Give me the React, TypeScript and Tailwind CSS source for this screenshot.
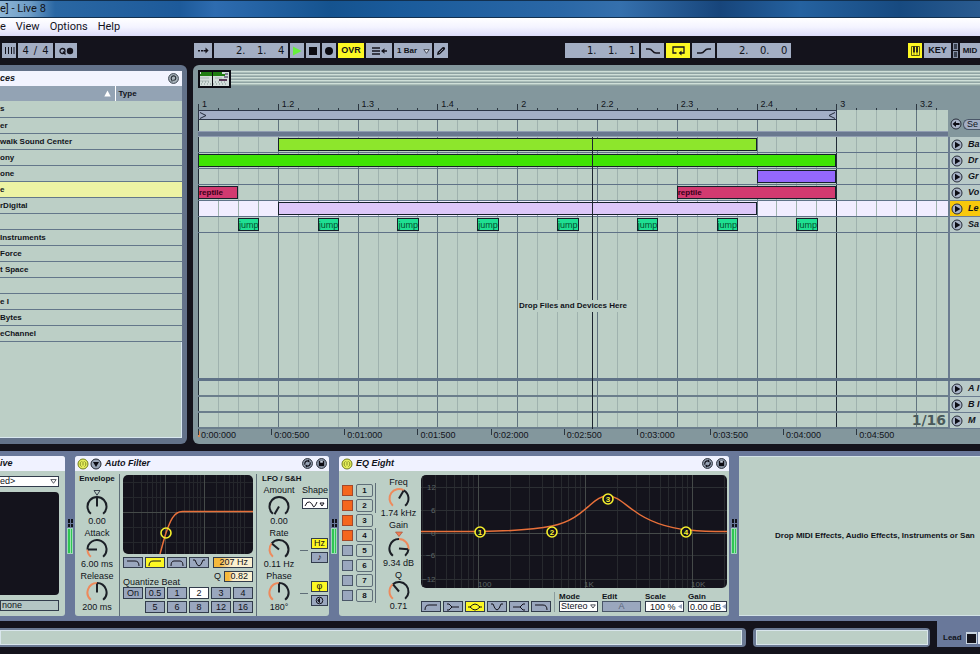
import type { ReactNode } from "react"
import clsx from "clsx"

const VISIBLE_BEATS = 9.4
const pct = (beats: number) => `${(beats / VISIBLE_BEATS) * 100}%`

const browserItems = [
  "s",
  "er",
  "walk Sound Center",
  "ony",
  "one",
  "e",
  "rDigital",
  "",
  "Instruments",
  "Force",
  "t Space",
  "",
  "e I",
  "Bytes",
  "eChannel",
]

const rulerLabels = ["1", "1.2", "1.3", "1.4", "2", "2.2", "2.3", "2.4", "3", "3.2"]

const timeLabels = [
  "0:00:000",
  "0:00:500",
  "0:01:000",
  "0:01:500",
  "0:02:000",
  "0:02:500",
  "0:03:000",
  "0:03:500",
  "0:04:000",
  "0:04:500",
]

type ClipData = { start: number; length: number; label?: string; color: string }

const jumpClips: ClipData[] = [0, 1, 2, 3, 4, 5, 6, 7].map((beat) => ({
  start: beat + 0.5,
  length: 0.27,
  label: "jump",
  color: "bg-[#1fdf92] text-[#04502f] text-[9px]",
}))

const tracks: { name: string; selected?: boolean; clips: ClipData[] }[] = [
  { name: "Ba", clips: [{ start: 1, length: 6, color: "bg-[#8de62c]" }] },
  { name: "Dr", clips: [{ start: 0, length: 8, color: "bg-[#3fe404]" }] },
  { name: "Gr", clips: [{ start: 7, length: 1, color: "bg-[#9468fd]" }] },
  {
    name: "Vo",
    clips: [
      { start: 0, length: 0.5, label: "reptile", color: "bg-[#d23a70] text-[#3a0018] font-bold text-[8px]" },
      { start: 6, length: 2, label: "reptile", color: "bg-[#d23a70] text-[#3a0018] font-bold text-[8px]" },
    ],
  },
  { name: "Le", selected: true, clips: [{ start: 1, length: 6, color: "bg-[#dcc6f8]" }] },
  { name: "Sa", clips: jumpClips },
]

const returns = ["A I", "B I", "M"]

function Grid() {
  const lines = Array.from({ length: 38 }, (_, i) => i)
  return (
    <div className="pointer-events-none absolute inset-0">
      {lines.map((i) => (
        <div
          key={i}
          className={clsx(
            "absolute inset-y-0 w-px",
            i === 0 || i === 32 ? "bg-[#1f2a35]" : i % 4 === 0 ? "bg-[#61747f]" : "bg-[#9fb2ae]"
          )}
          style={{ left: pct(i / 4) }}
        />
      ))}
    </div>
  )
}

function Clip({ clip }: { clip: ClipData }) {
  return (
    <div
      className={clsx("absolute top-px h-[13px] overflow-hidden border border-[#15202a] leading-[12px]", clip.color)}
      style={{ left: pct(clip.start), width: pct(clip.length) }}
    >
      {clip.label}
    </div>
  )
}

function TrackHeader({ name, selected }: { name: string; selected?: boolean }) {
  return (
    <div
      className={clsx(
        "flex w-8 shrink-0 items-center gap-[5px] overflow-hidden border-b border-l-2 border-[#6b7c90] pl-px",
        selected ? "bg-[#f8c80c]" : "bg-[#b9cac8]"
      )}
    >
      <button aria-label={`Unfold ${name}`} className="shrink-0">
        <svg width="12" height="12" viewBox="0 0 12 12">
          <circle cx="6" cy="6" r="5" fill="#a9b4c8" stroke="#252a36" />
          <path d="M4 2.8 9.4 6 4 9.2Z" fill="#0c0c14" />
        </svg>
      </button>
      <span className="whitespace-nowrap text-[9px] font-bold italic">{name}</span>
    </div>
  )
}

function TitleBar() {
  return (
    <div className="relative h-[18px] shrink-0 overflow-hidden border-y border-[#12304f] bg-[linear-gradient(90deg,#8fb6d6_0px,#6d9cc6_30px,#2a67a3_55px,#1d5a9a_180px,#2e6cb0_215px,#15538f_330px,#1a5b9b_400px,#2a67a6_560px,#3570ad_620px,#17457b_720px,#2562a0_800px,#174a80_900px,#2a5b90_980px)] text-[11px] leading-[16px]">
      e] - Live 8
    </div>
  )
}

function MenuBar() {
  return (
    <nav className="flex h-[18px] shrink-0 items-center gap-[10px] bg-linear-to-b from-white via-[#f4f4ff] to-[#dcdcf8] text-[11px] leading-[18px] text-[#14141c]">
      <button>e</button>
      <button>View</button>
      <button>Options</button>
      <button>Help</button>
    </nav>
  )
}

function Tool({ label, className, children }: { label: string; className: string; children: ReactNode }) {
  return (
    <button
      aria-label={label}
      className={clsx("flex h-[15px] shrink-0 items-center justify-center text-[9px] font-bold", className)}
    >
      {children}
    </button>
  )
}

function Position({ values }: { values: string[] }) {
  return (
    <div className="flex h-[15px] w-[74px] shrink-0 items-center bg-[#a3aec4] pl-[22px] font-['DejaVu_Sans',sans-serif] text-[10px]">
      {values.map((value, i) => (
        <span key={i} className="w-[21px] shrink-0 last:w-auto">
          {value}
        </span>
      ))}
    </div>
  )
}

function TransportBar() {
  return (
    <div className="flex h-[29px] shrink-0 items-center gap-[117px] overflow-hidden bg-[#14131c]">
      <div className="flex shrink-0 gap-[2px] pl-[2px]">
        <Tool label="Nudge" className="w-[14px] bg-[#a3aec4]">
          <svg width="11" height="9" viewBox="0 0 11 9" stroke="#14131c" fill="none">
            <path d="M1.5 1V8M4.5 1V8M7.5 1V8M10 1V8" />
          </svg>
        </Tool>
        <div className="flex h-[15px] w-[35px] items-center justify-center gap-[5px] bg-[#a3aec4] font-['DejaVu_Sans',sans-serif] text-[10px]">
          <span>4</span>
          <span>/</span>
          <span>4</span>
        </div>
        <Tool label="Metronome" className="w-[22px] bg-[#a3aec4]">
          <svg width="15" height="8" viewBox="0 0 15 8">
            <circle cx="3.5" cy="4" r="2.5" fill="none" stroke="#14131c" strokeWidth="1.3" />
            <path d="M4 4.500 6.500 7.500" stroke="#14131c" strokeWidth="1.200" />
            <circle cx="11" cy="4" r="3.200" fill="#14131c" />
          </svg>
        </Tool>
      </div>

      <div className="flex shrink-0 gap-[2px]">
        <Tool label="Follow" className="w-[18px] bg-[#a3aec4]">
          <svg width="11" height="7" viewBox="0 0 11 7" fill="#14131c">
            <path d="M0 3h2v1.4H0zM3 3h2v1.4H3zM5.500 3h2V.6L10.600 3.600 7.500 6.600V4.400h-2z" />
          </svg>
        </Tool>
        <Position values={["2.", "1.", "4"]} />
        <Tool label="Play" className="w-[14px] bg-[#a3aec4]">
          <svg width="10" height="10" viewBox="0 0 10 10">
            <path d="M1 .5 9.500 5 1 9.500Z" fill="#65f03c" />
          </svg>
        </Tool>
        <Tool label="Stop" className="w-[14px] bg-[#a3aec4]">
          <span className="size-2 bg-[#0c0b12]" />
        </Tool>
        <Tool label="Record" className="w-[14px] bg-[#a3aec4]">
          <span className="size-2 rounded-full bg-[#0c0b12]" />
        </Tool>
        <Tool label="Overdub" className="w-[26px] bg-[#fdf823]">
          OVR
        </Tool>
        <Tool label="Back to arrangement" className="w-[26px] bg-[#a3aec4]">
          <svg width="15" height="8" viewBox="0 0 15 8" stroke="#14131c" strokeWidth="1.300" fill="none">
            <path d="M0 1h8M0 4h8M0 7h8M10 4h5" />
            <path d="M12.500 1.300V6.700L9 4Z" fill="#14131c" stroke="none" />
          </svg>
        </Tool>
        <div className="relative flex h-[15px] w-[38px] bg-[#a3aec4]">
          <select aria-label="Quantization" className="w-full appearance-none pl-[3px] text-[8px] font-bold">
            <option>1 Bar</option>
          </select>
          <svg className="pointer-events-none absolute right-[2px] top-[6px]" width="7" height="5" viewBox="0 0 7 5">
            <path d="M.8.6h5.400L3.500 4.300Z" fill="#dfe4ee" stroke="#30343e" strokeWidth=".8" />
          </svg>
        </div>
        <Tool label="Draw mode" className="w-[14px] bg-[#a3aec4]">
          <svg width="10" height="10" viewBox="0 0 10 10">
            <path d="M1 9 1.600 6 6.500 1.200Q8 .4 9 1.800 9.400 2.800 8.500 3.800L3.800 8.200Z" fill="#14131c" />
            <path d="M3 7 7 3" stroke="#a3aec4" strokeWidth=".8" />
          </svg>
        </Tool>
      </div>

      <div className="flex shrink-0 gap-[2px]">
        <Position values={["1.", "1.", "1"]} />
        <Tool label="Punch in" className="w-[23px] bg-[#a3aec4]">
          <svg width="14" height="6" viewBox="0 0 14 6" fill="none" stroke="#14131c" strokeWidth="1.400">
            <path d="M0 1H3Q5 1 6.500 3T10 5H14" />
          </svg>
        </Tool>
        <Tool label="Loop" className="w-[24px] bg-[#fdf823]">
          <svg width="13" height="10" viewBox="0 0 13 10" fill="none" stroke="#14131c" strokeWidth="1.300">
            <path d="M4.500 7H1V1H12V7H8" />
            <path d="M9.500 4.500 6.600 7 9.500 9.500Z" fill="#14131c" stroke="none" />
          </svg>
        </Tool>
        <Tool label="Punch out" className="w-[23px] bg-[#a3aec4]">
          <svg width="14" height="6" viewBox="0 0 14 6" fill="none" stroke="#14131c" strokeWidth="1.400">
            <path d="M0 5H4Q6 5 7.500 3T11 1H14" />
          </svg>
        </Tool>
        <Position values={["2.", "0.", "0"]} />
      </div>

      <div className="flex min-w-0 flex-1 gap-[2px]">
        <Tool label="Computer MIDI keyboard" className="w-[14px] bg-[#fdf823]">
          <svg width="9" height="10" viewBox="0 0 9 10">
            <path d="M.5.500h8v9h-8z" fill="none" stroke="#4a4a10" strokeWidth=".9" />
            <path d="M3 .5v6M6 .5v6" stroke="#14131c" strokeWidth="1.800" />
            <path d="M3 6v3.500M6 6v3.500" stroke="#4a4a10" strokeWidth=".6" />
          </svg>
        </Tool>
        <Tool label="Key map" className="w-[27px] bg-[#a3aec4]">
          KEY
        </Tool>
        <div className="flex w-[5px] shrink-0 flex-col gap-px">
          <span className="flex-1 border border-[#8792a8] bg-[#39404f]" />
          <span className="flex-1 border border-[#8792a8] bg-[#39404f]" />
        </div>
        <button className="h-[15px] flex-1 whitespace-nowrap bg-[#a3aec4] text-center text-[8px] font-bold leading-[15px]">
          MID
        </button>
      </div>
    </div>
  )
}

function Browser() {
  return (
    <aside className="flex w-[187px] shrink-0 flex-col rounded-r-md bg-[#63728a] pb-[6px] pr-[5px] pt-[6px]">
      <div className="flex h-[15px] shrink-0 items-center justify-between bg-[#f2f4ff] pr-[3px]">
        <span className="text-[9px] font-bold italic">ces</span>
        <button aria-label="Hot-swap">
          <svg width="11" height="11" viewBox="0 0 11 11" fill="none">
            <circle cx="5.500" cy="5.500" r="4.900" fill="#aab5bd" stroke="#3b4450" />
            <path d="M4 8.500V7.300Q2.600 6 3.400 4.200T6.500 3Q8.200 3.800 7.800 5.600T5.200 7.200" stroke="#20262e" strokeWidth="1.100" />
          </svg>
        </button>
      </div>
      <table className="w-full table-fixed border-collapse text-left text-[8px] leading-[15px]">
        <thead>
          <tr className="h-[15px] bg-[#93a3b4]">
            <th aria-label="Name" className="w-[115px] border-r border-white p-0 pr-1">
              <svg width="7" height="7" viewBox="0 0 7 7" className="ml-auto">
                <path d="M3.500.5 6.700 6.500H.3Z" fill="#fff" />
              </svg>
            </th>
            <th className="p-0 pl-[3px]">Type</th>
          </tr>
        </thead>
        <tbody className="font-bold">
          {browserItems.map((item, i) => (
            <tr key={i} className={clsx("h-4 border-b border-[#63778a]", i === 5 ? "bg-[#edf3a4]" : "bg-[#bccfc6]")}>
              <td colSpan={2} className="whitespace-nowrap p-0">
                {item}
              </td>
            </tr>
          ))}
        </tbody>
      </table>
      <div className="flex-1 border-b border-r border-[#d9e8f0] bg-[#bccfc6]" />
    </aside>
  )
}

function Overview() {
  return (
    <div className="flex h-[22px] items-start bg-[#83979d] pt-1">
      <svg width="33" height="18" viewBox="0 0 33 18" className="shrink-0">
        <path d="M1 1h31v16H1z" fill="#d3dedb" stroke="#0b0b12" strokeWidth="2" />
        <path d="M3 3h21M2 5h25" stroke="#1f7d12" strokeWidth="2" />
        <path d="M27 4h3M26 7h4" stroke="#2c1a48" strokeWidth="1.200" />
        <path d="M2 8h9M17 8h7M2 11h9" stroke="#a9b7b5" />
        <path d="M21 10h8" stroke="#3b1238" strokeWidth="1.600" />
        <path d="M3 14h27M4 12h8M17 12h12" stroke="#7d918c" strokeDasharray="1 2" />
        <path d="M14.500 2v15" stroke="#0b0b12" />
      </svg>
      <div className="h-4 flex-1 bg-[repeating-linear-gradient(180deg,#8fa3a3_0px,#8fa3a3_1px,#cfdfd8_1px,#cfdfd8_2px,#aabdb9_2px,#aabdb9_3px)]" />
    </div>
  )
}

function Arrangement() {
  return (
    <main className="flex min-w-0 flex-1 flex-col rounded-l-md bg-[#83979d] pl-[5px] pt-px">
      <Overview />

      <div className="flex h-[22px] items-end">
        <div className="relative h-full flex-1">
          {Array.from({ length: 38 }, (_, i) => (
            <span
              key={i}
              className={clsx("absolute bottom-0 w-px bg-[#2b3640]", i % 4 === 0 ? "h-[6px]" : "h-[2px]")}
              style={{ left: pct(i / 4) }}
            />
          ))}
          {rulerLabels.map((label, i) => (
            <span key={label} className="absolute bottom-px pl-1 text-[9px] leading-[10px]" style={{ left: pct(i) }}>
              {label}
            </span>
          ))}
        </div>
        <div className="w-8 shrink-0" />
      </div>

      <div className="flex h-[21px]">
        <div className="relative flex-1 bg-[#bccfc6]">
          <Grid />
          <div
            className="relative flex h-[10px] items-center justify-between border border-[#2b3446] bg-[#a3aec6]"
            style={{ width: pct(8.01) }}
          >
            <svg width="8" height="7" viewBox="0 0 8 7" fill="none" stroke="#232a38">
              <path d="M1 .5 7 3.500 1 6.500" />
            </svg>
            <svg width="8" height="7" viewBox="0 0 8 7" fill="none" stroke="#232a38">
              <path d="M7 .5 1 3.500 7 6.500" />
            </svg>
          </div>
        </div>
        <div className="flex w-8 shrink-0 items-end gap-px pb-px pl-[2px]">
          <button aria-label="Previous locator" className="shrink-0">
            <svg width="12" height="12" viewBox="0 0 12 12">
              <circle cx="6" cy="6" r="5" fill="#a9b4c8" stroke="#252a36" />
              <path d="M2.500 6 6 3v2h3.500v2H6v2Z" fill="#0c0c14" />
            </svg>
          </button>
          <button className="h-[11px] flex-1 rounded-l-full border border-r-0 border-[#4a5668] bg-[#a3aec4] pl-[3px] text-left text-[9px] leading-[9px]">
            Se
          </button>
        </div>
      </div>

      <div className="flex h-[6px]">
        <div className="flex-1 border-y border-[#8f9cb0] bg-[#69788f]" />
        <div className="w-8 shrink-0" />
      </div>

      <div className="relative flex flex-1 flex-col">
        {tracks.map((track) => (
          <div key={track.name} className="flex h-4 shrink-0">
            <div
              className={clsx(
                "relative flex-1 overflow-hidden border-b border-[#5f7287]",
                track.selected ? "bg-[#f1edff]" : "bg-[#bccfc6]"
              )}
            >
              <Grid />
              {track.clips.map((clip) => (
                <Clip key={clip.start} clip={clip} />
              ))}
            </div>
            <TrackHeader name={track.name} selected={track.selected} />
          </div>
        ))}

        <div className="flex flex-1">
          <div className="relative flex flex-1 items-center justify-center bg-[#bccfc6]">
            <Grid />
            <p className="relative z-10 whitespace-nowrap bg-[#bccfc6] text-[8px] font-bold">Drop Files and Devices Here</p>
          </div>
          <div className="w-8 shrink-0 border-l-2 border-[#6b7c90] bg-[#bccfc6]" />
        </div>
        <div className="h-[3px] shrink-0 bg-[#5f7287]" />

        {returns.map((name) => (
          <div key={name} className="flex h-4 shrink-0">
            <div className="relative flex-1 border-b-2 border-[#6b7e8c] bg-[#bccfc6]">
              <Grid />
              {name === "M" && (
                <span className="absolute right-[2px] top-0 font-['DejaVu_Sans',sans-serif] text-[14px] font-bold leading-[14px] text-[#4a5a5b]">
                  1/16
                </span>
              )}
            </div>
            <TrackHeader name={name} />
          </div>
        ))}

        <div className="pointer-events-none absolute inset-y-0 left-0 right-8">
          <div className="absolute inset-y-0 w-px bg-[#1c2530]" style={{ left: pct(4.94) }} />
        </div>
      </div>

      <div className="flex h-[15px] shrink-0">
        <div className="relative flex-1">
          <span className="absolute left-0 top-[2px] h-[6px] w-[2px] bg-[#d98a55]" />
          {timeLabels.map((label, i) => (
            <span
              key={label}
              className="absolute top-0 h-[6px] border-l border-[#2b3640] pl-[2px] text-[9px] leading-[12px]"
              style={{ left: `${i * 9.75}%` }}
            >
              {label}
            </span>
          ))}
        </div>
        <div className="w-8 shrink-0" />
      </div>
    </main>
  )
}

function polar(angle: number, r: number) {
  const rad = (angle * Math.PI) / 180
  return `${12 + r * Math.sin(rad)} ${11.5 - r * Math.cos(rad)}`
}

function arc(from: number, to: number) {
  return `M${polar(from, 9.5)}A9.5 9.5 0 ${to - from > 180 ? 1 : 0} 1 ${polar(to, 9.5)}`
}

type KnobProps = { label: string; value: string; angle: number; from?: number; marker?: "outline" | "solid" }

function Knob({ label, value, angle, from = -140, marker }: KnobProps) {
  return (
    <div className="flex w-9 shrink-0 flex-col items-center whitespace-nowrap text-[9px] leading-[10px]">
      <span className="h-[10px]">
        {marker === "outline" ? (
          <svg width="8" height="6" viewBox="0 0 8 6" className="mt-[5px]">
            <path d="M1 .5h6L4 5.300Z" fill="none" stroke="#3b4450" />
          </svg>
        ) : (
          label
        )}
      </span>
      {marker === "solid" && (
        <svg width="8" height="7" viewBox="0 0 8 7">
          <path d="M.5 2h7L4 6.500Z" fill="#ef7d55" stroke="#a34a30" strokeWidth=".6" />
        </svg>
      )}
      <svg width="24" height="21" viewBox="0 0 24 21" fill="none" strokeWidth="2">
        {angle > from ? (
          <>
            {from > -140 && <path d={arc(-140, from)} stroke="#1b1f26" />}
            <path d={arc(from, angle)} stroke="#ee8a5c" />
            <path d={arc(angle, 140)} stroke="#1b1f26" />
          </>
        ) : (
          <path d={arc(-140, 140)} stroke="#1b1f26" />
        )}
        <path d={`M12 11.500L${polar(angle, 9)}`} stroke="#1b1f26" />
      </svg>
      <span>{value}</span>
    </div>
  )
}

function Meter() {
  return (
    <div className="flex w-[10px] shrink-0 flex-col items-center pt-[63px]">
      <div className="grid grid-cols-2 gap-px">
        <span className="h-[4px] w-[2px] bg-[#10131b]" />
        <span className="h-[4px] w-[2px] bg-[#10131b]" />
        <span className="h-[3px] w-[2px] bg-[#10131b]" />
        <span className="h-[3px] w-[2px] bg-[#10131b]" />
      </div>
      <div className="mt-px flex h-[26px] gap-px border border-[#9fd8b8] bg-[#9fe0b4]">
        <span className="w-[2px] bg-[#2fc653]" />
        <span className="w-px bg-[#2fc653]" />
      </div>
    </div>
  )
}

function SwapIcon() {
  return (
    <svg width="11" height="11" viewBox="0 0 11 11" fill="none">
      <circle cx="5.500" cy="5.500" r="4.900" fill="#98a4b6" stroke="#222630" />
      <path d="M3 6.800A2.800 2.800 0 0 1 6.500 3M8 4.200A2.800 2.800 0 0 1 4.500 8" stroke="#14131c" strokeWidth="1.200" />
      <path d="M6 1.600 8 3.300 5.800 4.600ZM5 9.400 3 7.700 5.200 6.400Z" fill="#14131c" />
    </svg>
  )
}

function SaveIcon() {
  return (
    <svg width="11" height="11" viewBox="0 0 11 11">
      <circle cx="5.500" cy="5.500" r="4.900" fill="#98a4b6" stroke="#222630" />
      <path d="M2.800 2.800h5.400v5.400H2.800z" fill="#0c0b12" />
      <path d="M4.200 3h2.600v1.700H4.200z" fill="#c8d0de" />
    </svg>
  )
}

function DeviceHeader({ title, fold }: { title: string; fold?: boolean }) {
  return (
    <header className="flex h-[15px] shrink-0 items-center gap-px rounded-t-[3px] bg-[#f0f2ff] px-[2px]">
      <button aria-label={`${title} on`}>
        <svg width="12" height="12" viewBox="0 0 12 12" fill="none">
          <circle cx="6" cy="6" r="5" fill="#e6ee5c" stroke="#6f7c1c" />
          <path d="M4.600 3.400A3 3 0 0 0 4.600 8.600M7.400 3.400A3 3 0 0 1 7.400 8.600M6 3.500v4" stroke="#7c8720" strokeWidth=".9" />
        </svg>
      </button>
      {fold && (
        <button aria-label="Fold device">
          <svg width="12" height="12" viewBox="0 0 12 12">
            <circle cx="6" cy="6" r="5" fill="#98a4b6" stroke="#222630" />
            <path d="M3 4h6L6 9Z" fill="#0c0b12" />
          </svg>
        </button>
      )}
      <h2 className="flex-1 pl-[2px] text-[9px] font-bold italic">{title}</h2>
      <button aria-label="Hot-swap preset" className="mr-[2px]">
        <SwapIcon />
      </button>
      <button aria-label="Save preset">
        <SaveIcon />
      </button>
    </header>
  )
}

const shapes = {
  lowpass: "M1 2H9Q13 2 13 7",
  highpass: "M1 7Q1 2 5 2H13",
  bandpass: "M1 7Q1 2 4 2H10Q13 2 13 7",
  notch: "M1 1H3Q5 7 7 7T11 1H13",
  lowshelf: "M1 1H3L6 4H13M1 7H3L6 4",
  bell: "M0 4H2Q5 1 7 1T12 4H14M2 4Q5 7 7 7T12 4",
  highshelf: "M1 4H8L11 1H13M8 4L11 7H13",
}

function ShapeButton({ shape, active }: { shape: keyof typeof shapes; active?: boolean }) {
  return (
    <button
      aria-label={shape}
      className={clsx(
        "flex h-[11px] w-5 items-center justify-center border border-[#323c4c]",
        active ? "bg-[#fdf823]" : "bg-[#9aa7be]"
      )}
    >
      <svg width="14" height="8" viewBox="0 0 14 8" fill="none" stroke="#14131c">
        <path d={shapes[shape]} />
      </svg>
    </button>
  )
}

const smallButton = "h-[11px] border border-[#323c4c] text-center text-[9px] leading-[9px]"

function InstrumentDevice() {
  return (
    <section className="flex w-[65px] shrink-0 flex-col overflow-hidden rounded-r-[3px] bg-[#bccfc6]">
      <header className="flex h-[15px] shrink-0 items-center bg-[#f0f2ff] text-[9px] font-bold italic">ive</header>
      <div className="flex flex-1 flex-col gap-[5px] pb-[5px] pr-[6px] pt-[5px]">
        <div className="relative">
          <select
            aria-label="Program"
            className="block h-[11px] w-full appearance-none border border-l-0 border-[#323c4c] bg-white text-[9px] leading-[9px]"
          >
            <option>ed&gt;</option>
          </select>
          <svg className="pointer-events-none absolute right-[2px] top-[3px]" width="7" height="5" viewBox="0 0 7 5">
            <path d="M.8.6h5.400L3.500 4.300Z" fill="none" stroke="#30343e" strokeWidth=".8" />
          </svg>
        </div>
        <div className="flex-1 rounded-r-[4px] bg-[#14131c]" />
        <input
          aria-label="Parameter"
          defaultValue="none"
          className="h-[11px] w-full border border-[#323c4c] bg-[#b4c6c4] pl-px text-[9px]"
        />
      </div>
    </section>
  )
}

function AutoFilter() {
  return (
    <section className="flex w-[254px] shrink-0 flex-col rounded-[3px] bg-[#bccfc6]">
      <DeviceHeader title="Auto Filter" fold />
      <div className="flex flex-1 pt-[3px]">
        <div className="flex w-[45px] shrink-0 flex-col items-center gap-[2px] border-r border-[#5f6e78]">
          <h3 className="h-[9px] text-[8px] font-bold leading-[10px]">Envelope</h3>
          <Knob label="" marker="outline" value="0.00" angle={0} from={0} />
          <Knob label="Attack" value="6.00 ms" angle={-90} />
          <Knob label="Release" value="200 ms" angle={0} />
        </div>

        <div className="flex w-[137px] shrink-0 flex-col border-r border-[#5f6e78] px-[3px]">
          <svg width="130" height="79" viewBox="0 0 130 79" className="mb-[3px] mt-px rounded-[5px] bg-[#14131c]" fill="none">
            <path d="M10.500 0V79M18.500 0V79M24.500 0V79M29.500 0V79M33.500 0V79M37.500 0V79M53.500 0V79M61.500 0V79M66.500 0V79M70.500 0V79M74.500 0V79M77.500 0V79M93.500 0V79M101.500 0V79M106.500 0V79M110.500 0V79M114.500 0V79M117.500 0V79M121.500 0V79M0 7.500H130M0 22.500H130M0 52.500H130M0 67.500H130" stroke="#25272c" />
            <path d="M42.500 0V79M81.500 0V79M0 37.500H130" stroke="#454a49" />
            <path d="M37 79C39 72 41 64 43 58C47 46 51 36 60 36.500H130" stroke="#e8703a" strokeWidth="1.500" />
            <circle cx="43" cy="58" r="5" stroke="#f6f02c" strokeWidth="1.600" />
          </svg>
          <div className="mb-[3px] flex gap-[2px]">
            <ShapeButton shape="lowpass" />
            <ShapeButton shape="highpass" active />
            <ShapeButton shape="bandpass" />
            <ShapeButton shape="notch" />
            <input
              aria-label="Frequency"
              defaultValue="207 Hz"
              className="ml-[2px] h-[11px] w-[40px] border border-[#323c4c] bg-linear-to-r from-[#f5b93c] from-15% to-[#fbf0d0] to-50% pr-1 text-right text-[9px]"
            />
          </div>
          <div className="flex h-4 justify-between">
            <span className="self-end text-[9px] leading-[10px]">Quantize Beat</span>
            <label className="flex h-[11px] items-center gap-[3px] text-[9px]">
              Q
              <input
                defaultValue="0.82"
                className="h-[11px] w-[29px] border border-[#323c4c] bg-linear-to-r from-[#f5b93c] from-15% to-[#fbf0d0] to-30% pr-1 text-right text-[9px]"
              />
            </label>
          </div>
          <div className="grid grid-cols-6 gap-[2px]">
            {["On", "0.5", "1", "2", "3", "4", "", "5", "6", "8", "12", "16"].map((label, i) =>
              label ? (
                <button
                  key={i}
                  className={clsx(
                    "h-3 border border-[#323c4c] text-center text-[9px] leading-[10px]",
                    label === "2" ? "bg-white" : "bg-[#9aa7be]"
                  )}
                >
                  {label}
                </button>
              ) : (
                <span key={i} />
              )
            )}
          </div>
        </div>

        <div className="flex flex-1 flex-col gap-[2px] pl-[4px] pr-px">
          <h3 className="h-[9px] pl-px text-[8px] font-bold leading-[10px]">LFO / S&amp;H</h3>
          <div className="flex justify-between">
            <Knob label="Amount" value="0.00" angle={-150} />
            <div className="flex w-[26px] flex-col items-center text-[9px] leading-[10px]">
              Shape
              <button aria-label="LFO shape" className="mt-[3px] flex h-[11px] w-full items-center justify-center border border-[#323c4c] bg-white">
                <svg width="22" height="8" viewBox="0 0 22 8" fill="none" stroke="#14131c">
                  <path d="M1 6Q3 1 5.500 2T9 6T13 2M16 3h4l-2 3Z" />
                </svg>
              </button>
            </div>
          </div>
          <div className="flex justify-between">
            <Knob label="Rate" value="0.11 Hz" angle={-50} />
            <span className="mt-[22px] h-px w-[8px] bg-[#5f6e78]" />
            <div className="flex w-[17px] flex-col gap-[3px] pt-[10px]">
              <button className={clsx(smallButton, "bg-[#fdf823]")}>Hz</button>
              <button className={clsx(smallButton, "bg-[#9aa7be]")}>♪</button>
            </div>
          </div>
          <div className="flex justify-between">
            <Knob label="Phase" value="180°" angle={0} />
            <span className="mt-[22px] h-px w-[8px] bg-[#5f6e78]" />
            <div className="flex w-[17px] flex-col gap-[3px] pt-[10px]">
              <button className={clsx(smallButton, "bg-[#fdf823]")}>φ</button>
              <button aria-label="Spin" className={clsx(smallButton, "flex items-center justify-center bg-[#9aa7be]")}>
                <svg width="9" height="9" viewBox="0 0 9 9" fill="none" stroke="#14131c">
                  <circle cx="4.500" cy="4.500" r="3.300" />
                  <path d="M4.500 2.500v4L2.800 4.500Z" fill="#14131c" />
                </svg>
              </button>
            </div>
          </div>
        </div>
      </div>
    </section>
  )
}

const decades = [30, 40, 50, 60, 70, 80, 90, 200, 300, 400, 500, 600, 700, 800, 900, 2000, 3000, 4000, 5000, 6000, 7000, 8000, 9000, 20000]
const freqX = (hz: number) => Math.round(57 + 107 * (Math.log10(hz) - 2)) + 0.5

const eqNodes = [
  { id: "1", x: 59, y: 57 },
  { id: "2", x: 131, y: 57 },
  { id: "3", x: 187, y: 24 },
  { id: "4", x: 265, y: 57 },
]

function EqGraph() {
  return (
    <svg width="306" height="113" viewBox="0 0 306 113" className="mt-px rounded-[5px] bg-[#14131c]" fill="none">
      {decades.map((hz) => (
        <path key={hz} d={`M${freqX(hz)} 0V113`} stroke="#27292e" />
      ))}
      <path d="M0 12.500H306M0 35.500H306M0 80.500H306M0 104.500H306" stroke="#2c2f33" />
      <path d="M57.500 0V113M164.500 0V113M271.500 0V113M0 58.500H306" stroke="#454a49" />
      <g fill="#5d6566" fontSize="8">
        <text x="6" y="15">12</text>
        <text x="10" y="38">6</text>
        <text x="10" y="61">0</text>
        <text x="5" y="83">−6</text>
        <text x="1" y="107">−12</text>
        <text x="57" y="112">100</text>
        <text x="163" y="112">1K</text>
        <text x="270" y="112">10K</text>
      </g>
      <path d="M0 56.500H60C90 56 112 55 131 51C150 47 160 38 168 31C176 24 180 21 187 21C196 21 202 28 212 35C228 47 245 53 268 55C282 56.500 292 56.500 306 56.500" stroke="#e8703a" strokeWidth="1.500" />
      {eqNodes.map((node) => (
        <g key={node.id}>
          <circle cx={node.x} cy={node.y} r="5" fill="#14131c" stroke="#f6f02c" strokeWidth="1.600" />
          <text x={node.x} y={node.y + 3} fill="#f6f02c" fontSize="8" fontWeight="700" textAnchor="middle">
            {node.id}
          </text>
        </g>
      ))}
    </svg>
  )
}

function EqEight() {
  return (
    <section className="flex w-[390px] shrink-0 flex-col rounded-[3px] bg-[#bccfc6]">
      <DeviceHeader title="EQ Eight" />
      <div className="flex flex-1 pt-[3px]">
        <div className="flex w-[37px] shrink-0 flex-col pl-[3px] pt-[9px]">
          {[1, 2, 3, 4, 5, 6, 7, 8].map((band) => (
            <div key={band} className={clsx("flex h-[15px] items-center gap-[3px]", band !== 3 && "border-r border-[#5f6e78]")}>
              <input
                type="checkbox"
                aria-label={`Band ${band}`}
                defaultChecked={band < 5}
                className="h-[11px] w-[11px] appearance-none border border-[#4a5668] bg-[#9aa7be] checked:border-[#a3482a] checked:bg-[#f5661c]"
              />
              <button className="h-[13px] w-[17px] rounded-[2px] border border-[#5f6e78] text-[8px] font-bold leading-[11px]">
                {band}
              </button>
            </div>
          ))}
        </div>

        <div className="flex w-[45px] shrink-0 flex-col items-center gap-[2px] pt-[3px]">
          <Knob label="Freq" value="1.74 kHz" angle={30} />
          <Knob label="Gain" value="9.34 dB" angle={95} from={0} marker="solid" />
          <Knob label="Q" value="0.71" angle={-40} />
        </div>

        <div className="flex flex-col">
          <EqGraph />
          <div className="mt-[4px] flex items-end">
            <div className="flex gap-[2px]">
              <ShapeButton shape="highpass" />
              <ShapeButton shape="lowshelf" />
              <ShapeButton shape="bell" active />
              <ShapeButton shape="notch" />
              <ShapeButton shape="highshelf" />
              <ShapeButton shape="lowpass" />
            </div>
            <div className="ml-[3px] flex gap-1 border-l border-[#8b9c9c] pl-1 text-[8px] font-bold">
              <label className="relative flex w-[39px] flex-col leading-[9px]">
                Mode
                <select className="h-[11px] appearance-none border border-[#323c4c] bg-white pl-px text-[9px] font-normal leading-[9px]">
                  <option>Stereo</option>
                </select>
                <svg className="pointer-events-none absolute bottom-[3px] right-[2px]" width="6" height="5" viewBox="0 0 7 5">
                  <path d="M.8.6h5.400L3.500 4.300Z" fill="none" stroke="#30343e" />
                </svg>
              </label>
              <div className="flex w-[39px] flex-col leading-[9px]">
                Edit
                <button className="h-[11px] border border-[#4a5668] bg-[#9aa7be] text-[9px] font-normal leading-[9px] text-[#5a667a]">
                  A
                </button>
              </div>
              <label className="relative flex w-[39px] flex-col leading-[9px]">
                Scale
                <input
                  defaultValue="100 %"
                  className="h-[11px] w-full border border-[#323c4c] bg-white pl-1 text-[9px] font-normal"
                />
                <svg className="pointer-events-none absolute bottom-[3px] right-[2px]" width="4" height="5" viewBox="0 0 4 5">
                  <path d="M4 0V5L0 2.500Z" fill="#9aa7be" />
                </svg>
              </label>
              <label className="relative flex w-[39px] flex-col leading-[9px]">
                Gain
                <input
                  defaultValue="0.00 dB"
                  className="h-[11px] w-full border border-[#323c4c] bg-white pl-px text-[9px] font-normal"
                />
                <svg className="pointer-events-none absolute bottom-[3px] right-px" width="4" height="5" viewBox="0 0 4 5">
                  <path d="M4 0V5L0 2.500Z" fill="#9aa7be" />
                </svg>
              </label>
            </div>
          </div>
        </div>
      </div>
    </section>
  )
}

function DeviceChain() {
  return (
    <div className="flex h-[170px] shrink-0 bg-[#69789a] pb-[5px] pt-[5px]">
      <InstrumentDevice />
      <Meter />
      <AutoFilter />
      <Meter />
      <EqEight />
      <Meter />
      <div className="flex min-w-0 flex-1 items-center border-y border-[#d3e3e6] bg-[#bccfc6] pl-9">
        <p className="whitespace-nowrap text-[8px] font-bold">Drop MIDI Effects, Audio Effects, Instruments or San</p>
      </div>
    </div>
  )
}

function StatusBar() {
  return (
    <footer className="flex h-[33px] shrink-0 items-start overflow-hidden bg-[#14131c]">
      <div className="mt-[7px] h-[19px] flex-1 rounded-r-[4px] bg-[#6b7a94] py-[2px] pr-1">
        <div className="h-full border border-[#d9e6ec] bg-[#bccfc6]" />
      </div>
      <div className="ml-[7px] mt-[7px] h-[19px] w-[177px] rounded-[4px] bg-[#6b7a94] py-[2px] pl-[3px] pr-[2px]">
        <div className="h-full border border-[#d9e6ec] bg-[#bccfc6]" />
      </div>
      <div className="ml-[7px] flex h-[26px] w-[43px] items-center gap-1 overflow-hidden bg-[#69789a] pl-[6px] pt-[7px]">
        <span className="text-[8px] font-bold">Lead</span>
        <span className="h-3 w-[11px] shrink-0 border border-t-2 border-[#c9d4e0] bg-[#14131c]" />
        <span className="-ml-[3px] h-3 w-[11px] shrink-0 bg-[#e2e8f2]" />
      </div>
    </footer>
  )
}

export default function App() {
  return (
    <div className="flex h-screen flex-col overflow-hidden bg-[#14131c] font-['Liberation_Sans',Arial,sans-serif] text-[#11131a]">
      <div className="shrink-0 font-[Roboto,sans-serif]">
        <TitleBar />
        <MenuBar />
      </div>
      <TransportBar />
      <div className="flex min-h-0 flex-1 gap-[6px] pb-[7px]">
        <Browser />
        <Arrangement />
      </div>
      <DeviceChain />
      <StatusBar />
    </div>
  )
}
